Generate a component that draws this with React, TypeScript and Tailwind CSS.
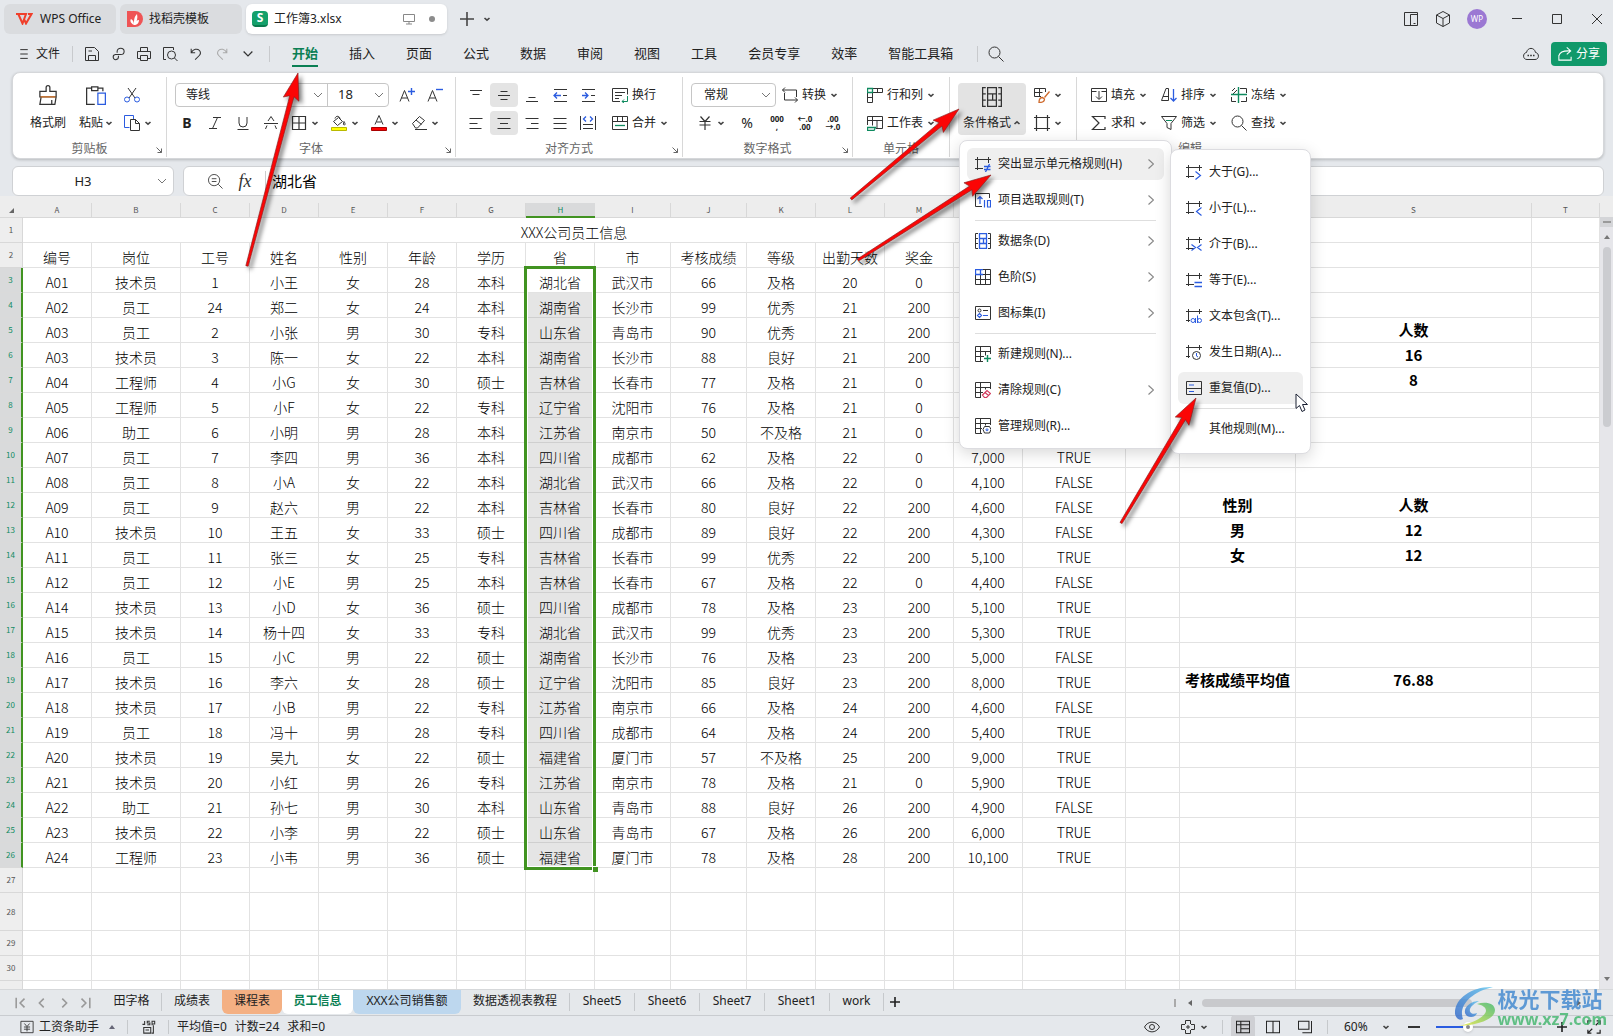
import type { ReactNode } from 'react';

type IconProps = { children: ReactNode; className?: string };

function Icon({ children, className = 'h-4 w-4 text-[#333]' }: IconProps) {
  return (
    <svg viewBox="0 0 16 16" fill="none" stroke="currentColor" className={`shrink-0 ${className}`} aria-hidden="true">
      {children}
    </svg>
  );
}

function Caret({ up = false }: { up?: boolean }) {
  return (
    <svg viewBox="0 0 8 8" fill="none" stroke="#444" strokeWidth="1.6" className="h-2 w-2 shrink-0" aria-hidden="true">
      <path d={up ? 'M1.5 5 4 2.8 6.5 5' : 'M1.5 3 4 5.2 6.5 3'} />
    </svg>
  );
}

function Chevron() {
  return (
    <svg viewBox="0 0 10 10" fill="none" stroke="#777" className="pointer-events-none h-2.5 w-2.5 shrink-0" aria-hidden="true">
      <path d="M1 3l4 4 4-4" />
    </svg>
  );
}

const blue = '#2b5ce0';
const green = '#0f8a5f';
const frame = <path d="M2.5 1v13M0 3.5h16M13.5 1v6M0 12.5h8" />;

const icons: Record<string, ReactNode> = {
  save: <path d="M1.5 1.5h9l4 4v9h-13zM4.5 14V9.500h7V14M4.500 5h3.500" />,
  link: <path strokeWidth="1.200" d="M7 6.500V5a4 3.500 0 1 1 4 3.500H5a3 3 0 1 0 3.500 3V10" />,
  print: <path d="M4.5 5V1.500h7V5M4 12.500H1.500v-7h13v7H12M4.500 9.500h7v5h-7z" />,
  preview: (
    <>
      <path d="M4 13.500H1.500v-12h10V4" />
      <circle cx="9.500" cy="9" r="4" />
      <path d="m12.500 12 3 3" />
    </>
  ),
  undo: <path strokeWidth="1.200" d="M2.500 2v4.500H7M2.500 6.500C5 2 9.500 1.500 12 4c2 2.500 1 4.500-.5 6L7 14.500" />,
  redo: <path strokeWidth="1.200" d="M13.500 2v4.500H9M13.500 6.500C11 2 6.500 1.500 4 4c-2 2.500-1 4.500.5 6L9 14.500" />,
  cut: (
    <>
      <path d="m4 1 7 10M12 1 5 11" />
      <g stroke={blue}>
        <circle cx="3" cy="12.500" r="2.500" />
        <circle cx="13" cy="12.500" r="2.500" />
      </g>
    </>
  ),
  copy: (
    <>
      <path stroke={blue} d="M5.500 12.500h-5v-12h9V4" />
      <path d="M6.500 4.500h5l4 4v7h-9zM11.500 4.500v4h4" />
    </>
  ),
  italic: <path d="M6 2.500h8M2 13.500h8M10.500 2.500l-5 11" />,
  underline: <path d="M4 2v6a4 4 0 0 0 8 0V2M2.500 14.500h11" />,
  strike: <path d="M5 6 8 1.500 11 6M1 8.500h14M4 10.500 2.500 14M12 10.500l1.500 3.500" />,
  border: <path strokeWidth="1.200" d="M1.500 1.500h13v13h-13zM8 1.500v13M1.500 8h13" />,
  fill: (
    <>
      <path d="M4 3.500C5 0 9 1 9 4M2.500 6.500l5-4 4 4-5 4zM13 6.500c1 1.500 1.500 3 .5 3.500s-1.500-1-.5-3.500" />
      <path fill="#ff0" stroke="#b9b900" d="M.5 12.500h15v3H.5z" />
    </>
  ),
  fontColor: (
    <>
      <path d="M4 9.500 8 .5l4 9M5.500 7h5" />
      <path fill="red" stroke="#a00" d="M.5 12.500h15v3H.5z" />
    </>
  ),
  erase: <path d="m1.500 8.500 7-7 5 4-7 7.500h-2zM5 5l5.500 4.500M4 14.500h12" />,
  bigger: (
    <>
      <path d="M1 14.500 5.500 3.500 10 14.500M2.500 11h6" />
      <path stroke={blue} strokeWidth="1.400" d="M9 4.500h7M12.500 1v7" />
    </>
  ),
  smaller: (
    <>
      <path d="M1 14.500 5.500 3.500 10 14.500M2.500 11h6" />
      <path stroke={blue} strokeWidth="1.400" d="M9 2.500h7" />
    </>
  ),
  top: <path d="M2 3.500h12M4.500 7.500h7" />,
  middle: <path d="M4.500 4.500h7M2 8.500h12M4.500 12.500h7" />,
  bottom: <path d="M4.500 10.500h7M2 14.500h12" />,
  outdent: (
    <>
      <path d="M2 2.500h13M11 8.500h4M2 14.500h13" />
      <path stroke={blue} strokeWidth="1.300" d="M9 8.500H2M5 5.500l-3 3 3 3" />
    </>
  ),
  indent: (
    <>
      <path d="M2 2.500h13M11 8.500h4M2 14.500h13" />
      <path stroke={blue} strokeWidth="1.300" d="M2 8.500h6M5 5.500l3 3-3 3" />
    </>
  ),
  left: <path d="M1.500 3.500h13M1.500 8.500h8M1.500 13.500h12" />,
  center: <path d="M1.500 3.500h13M4 8.500h8M1.500 13.500h13" />,
  right: <path d="M1.500 3.500h13M7 8.500h7.500M2.500 13.500h12" />,
  justify: <path d="M1.500 3.500h13M1.500 8.500h13M1.500 13.500h13" />,
  distribute: (
    <>
      <path d="M.5 1v14M15.500 1v14M3 9.500h10M3 13.500h10" />
      <path stroke={blue} strokeWidth="1.300" d="M6 1.500 3.500 4 6 6.500M10 1.500 12.500 4 10 6.500" />
    </>
  ),
  wrap: (
    <>
      <path d="M8 14.500H.5V1.500h15v6M3 5.500h10M3 8.500h7M3 11.500h4" />
      <path stroke={green} d="M15.500 9v5.500H10M12 12.500l-2 2 2 1.500" />
    </>
  ),
  merge: (
    <>
      <path d="M.5 1.500h15v13H.5zM.5 6.500h15M5.500 1.500v5M10.500 1.500v5" />
      <path stroke={green} strokeWidth="1.300" d="M3 10.500h10" />
    </>
  ),
  convert: <path d="M3 .5l-2.500 2.500h14v7M13 15.500l2.500-2.500h-13V6M.5 3 3 5.500M15.500 13 13 10.500" />,
  yuan: <path strokeWidth="1.200" d="m3.500 1.500 4.500 5 4.500-5M2.500 6.500h11M2.500 10h11M8 6.500v8.500" />,
  rowscols: (
    <>
      <path d="M5.500 1.500h10v4h-10M10.500 1.500v4M.5 5.500v10h5v-10M.5 10.500h5" />
      <path stroke={green} strokeWidth="1.300" d="M.5 1.500h5v4h-5z" />
    </>
  ),
  worksheet: (
    <>
      <path d="M.5 10V1.500h15v12H9M.5 5.500h15M5.500 1.500v9M10 5.500v8" />
      <path stroke={green} strokeWidth="1.300" d="M.5 12.500h8l-1.500 3H.5z" />
    </>
  ),
  cellStyle: (
    <>
      <path d="M7 9.500H.5v-8h11V5M.5 5.500h8M5.500 1.500v8" />
      <path stroke="#cf6a2c" strokeWidth="1.300" d="m15.500 4.500-5 6M5 15.500c0-3 1-5 3.500-5l2 1.500c0 2.500-2 3.500-5.500 3.500z" />
    </>
  ),
  cellFrame: <path strokeWidth="1.200" d="M2.500 0v16M13.500 0v16M0 2.500h16M0 13.500h16" />,
  fillDown: <path d="M.5 1.500h15v13H.5zM.5 4.500h5M10.500 4.500h5M8 4v8M5 9.500l3 3 3-3" />,
  sort: (
    <>
      <path d="M.5 13.500h7v-12H5zM2 9.500h5.500" />
      <path stroke={blue} strokeWidth="1.300" d="M12.500 2v12M9.500 11l3 3 3-3" />
    </>
  ),
  freeze: (
    <>
      <path d="M1 4l3-3M1 8l5-5M.5 10v4.500H5M10 14.500h5.500V10M9 1.500h6.500V6" />
      <path stroke={green} strokeWidth="1.400" d="M0 7.500h16M7.500 0v16" />
    </>
  ),
  sum: <path strokeWidth="1.200" d="M14 4V1.500H1.500L8 8l-6.500 6.500H14V12" />,
  filter: (
    <>
      <path d="M.5 1.500h15l-5.500 7v6l-4-2V8.500z" />
      <path stroke={green} d="M5 5.500h6" />
    </>
  ),
  find: (
    <>
      <circle cx="6.500" cy="6.500" r="5.500" />
      <path d="m10.500 10.500 5 5" />
    </>
  ),
  notEqual: (
    <>
      {frame}
      <path stroke={blue} strokeWidth="1.300" d="M9 10.500h6.500M9 13.500h6.500M14.500 8l-4 8" />
    </>
  ),
  topTen: (
    <>
      <path d="M7 14.500H.5v-13h14V6" />
      <path stroke={blue} strokeWidth="1.200" d="M5 12V4.500M2.500 7 5 4.500 7.500 7M9.500 8v7.500M12.500 8.500h3v6.500h-3z" />
    </>
  ),
  dataBar: (
    <>
      <path d="M3 .5H.5v15H3M.5 5.500H3M.5 10.500H3M13 .5h2.500v15H13M15.500 5.500H13M15.500 10.500H13" />
      <path stroke={blue} strokeWidth="1.300" d="M4.500.5h7v5h-7zM4.500 5.500h4v5h-4zM4.500 10.500h7v5h-7zM11.500 5.500v5" />
    </>
  ),
  scale: (
    <>
      <path d="M.5.5h15v15H.5zM.5 5.500h15M.5 10.500h15M5.500 5v10.500M10.500 0v15.500" />
      <path stroke={blue} strokeWidth="1.300" d="M8 .5H.5v5H8M5.500.5v5" />
    </>
  ),
  iconSet: (
    <>
      <path d="M.5 1.500h15v13H.5zM8 5.500h5" />
      <circle cx="4.500" cy="5.500" r="1.500" />
      <path stroke={blue} strokeWidth="1.200" d="M8 10.500h5M4.500 8.500l2 2-2 2-2-2z" />
    </>
  ),
  newRule: (
    <>
      <path d="M8 15.500H.5V.5h15V8M.5 5.500h15M.5 10.500H9M5.500.5v15M10.500 5.500v4" />
      <path stroke={green} strokeWidth="1.400" d="M9 12.500h7M12.500 9v7" />
    </>
  ),
  clearRule: (
    <>
      <path d="M6 15.500H.5V.5h15V7M.5 5.500h15M.5 10.500H8M5.500.5v15M10.500 5.500v2" />
      <path stroke="#d23a5e" strokeWidth="1.200" d="m7.500 13 4.500-4.500 3.500 3-4 4h-2zM10 10.500l3.500 3" />
    </>
  ),
  manageRule: (
    <>
      <path d="M7 15.500H.5V.5h15V7M.5 5.500h15M.5 10.500H7M5.500.5v15M10.500 5.500v2" />
      <path d="M9.500 8.500h5l1.500 3-1.500 3.500h-5L8 11.500z" />
      <circle cx="12" cy="11.800" r="1" stroke={blue} />
    </>
  ),
  greater: (
    <>
      {frame}
      <path stroke={blue} strokeWidth="1.200" d="m9.500 7.500 5 4-5 4" />
    </>
  ),
  less: (
    <>
      {frame}
      <path stroke={blue} strokeWidth="1.200" d="m15.500 7.500-5 4 5 4" />
    </>
  ),
  between: (
    <>
      {frame}
      <path stroke={blue} strokeWidth="1.200" d="m5.500 8.500 4 3-4 3M15.500 8.500l-4 3 4 3" />
    </>
  ),
  equal: (
    <>
      {frame}
      <path stroke={blue} strokeWidth="1.300" d="M8.500 10.500H16M8.500 14.500H16" />
    </>
  ),
  contains: (
    <>
      <path d="M2.500 1v13M0 3.500h16M13.500 1v5M0 12.500h4" />
      <g stroke={blue}>
        <circle cx="7" cy="12.500" r="2" />
        <circle cx="13.500" cy="12.500" r="2" />
        <path d="M9.500 10v5M11.500 7.500V15" />
      </g>
    </>
  ),
  dateRule: (
    <>
      <path d="M2.500 1v13M0 3.500h16M13.500 1v5M0 12.500h4" />
      <circle cx="10.500" cy="11.500" r="4" />
      <path stroke={blue} d="M10.500 9v3l1.500 1" />
    </>
  ),
  duplicate: (
    <>
      <path d="M.5 1.500h15v13H.5zM.5 8.500h15" />
      <path stroke={blue} strokeWidth="1.200" d="M3 5h5M3 11.500h5" />
    </>
  ),
};

function Tool({ icon, label, caret, active, className = 'w-7' }: { icon: string; label: string; caret?: boolean; active?: boolean; className?: string }) {
  return (
    <button aria-label={label} className={`flex h-6 shrink-0 items-center justify-center gap-1 rounded ${active ? 'bg-[#e4e4e4]' : ''} ${className}`}>
      <Icon className="h-4 w-4 text-[#333]">{icons[icon]}</Icon>
      {caret && <Caret />}
    </button>
  );
}

function TextTool({ icon, label, caret = true }: { icon: string; label: string; caret?: boolean }) {
  return (
    <button className="flex h-6 shrink-0 items-center gap-1 text-xs">
      <Icon>{icons[icon]}</Icon>
      <span>{label}</span>
      {caret && <Caret />}
    </button>
  );
}

function Group({ title, launcher, children, className }: { title?: string; launcher?: boolean; children: ReactNode; className: string }) {
  return (
    <section className={`relative flex h-20 shrink-0 flex-col border-r border-[#d8d8d8] ${className}`}>
      <div className="pt-1">{children}</div>
      {title && <p className="mt-1 text-center text-xs leading-4 text-[#666]">{title}</p>}
      {launcher && (
        <svg viewBox="0 0 6 6" fill="none" stroke="#666" className="absolute right-1 bottom-1 h-1.5 w-1.5" aria-hidden="true">
          <path d="m.5.5 5 5M5.500 1.500v4h-4" />
        </svg>
      )}
    </section>
  );
}

const ruleMenu = [
  { icon: 'notEqual', label: '突出显示单元格规则(H)', sub: true, active: true },
  { icon: 'topTen', label: '项目选取规则(T)', sub: true, line: true },
  { icon: 'dataBar', label: '数据条(D)', sub: true },
  { icon: 'scale', label: '色阶(S)', sub: true },
  { icon: 'iconSet', label: '图标集(I)', sub: true, line: true },
  { icon: 'newRule', label: '新建规则(N)...' },
  { icon: 'clearRule', label: '清除规则(C)', sub: true },
  { icon: 'manageRule', label: '管理规则(R)...' },
];

const highlightMenu = [
  { icon: 'greater', label: '大于(G)...' },
  { icon: 'less', label: '小于(L)...' },
  { icon: 'between', label: '介于(B)...' },
  { icon: 'equal', label: '等于(E)...' },
  { icon: 'contains', label: '文本包含(T)...' },
  { icon: 'dateRule', label: '发生日期(A)...' },
  { icon: 'duplicate', label: '重复值(D)...', active: true, line: true },
  { icon: '', label: '其他规则(M)...' },
];

type MenuEntry = { icon: string; label: string; sub?: boolean; active?: boolean; line?: boolean };

function Menu({ items, className }: { items: MenuEntry[]; className: string }) {
  return (
    <div role="menu" className={`absolute rounded-lg border border-[#dcdce0] bg-white px-[7px] shadow-[0_4px_16px_rgba(0,0,0,0.16)] ${className}`}>
      {items.map((item) => (
        <div key={item.label} className="flex flex-col">
          <button
            role="menuitem"
            className={`my-0.5 flex h-8 items-center gap-[7px] rounded-md px-2 text-xs text-[#222] ${item.active ? 'bg-[#efefef]' : ''}`}
          >
            <Icon>{item.icon && icons[item.icon]}</Icon>
            <span className="grow text-left whitespace-nowrap">{item.label}</span>
            {item.sub && (
              <svg viewBox="0 0 6 10" fill="none" stroke="#888" strokeWidth="1.200" className="mr-0.5 h-2.5 w-1.5" aria-hidden="true">
                <path d="m.5.5 5 4.500-5 4.500" />
              </svg>
            )}
          </button>
          {item.line && <hr className="mx-2 my-0.5 border-[#dedede]" />}
        </div>
      ))}
    </div>
  );
}

function TitleBar() {
  return (
    <header className="flex h-9 shrink-0 items-center pt-1 pr-2 pb-0.5 pl-1 text-xs">
      <button className="flex h-[30px] w-28 items-center gap-[7px] rounded-md bg-[#dadcdf] pl-3">
        <svg viewBox="0 0 17 12" className="h-3 w-[17px]" fill="none" stroke="#f0402c" strokeWidth="2" aria-hidden="true">
          <path d="M0 1h10L6.500 10.500 2.500 1.500M8 6l2 4.500L15.500 1H12" />
        </svg>
        WPS Office
      </button>
      <button className="ml-1 flex h-[30px] w-[122px] items-center gap-1.5 rounded-md bg-[#dadcdf] pl-[7px]">
        <svg viewBox="0 0 16 16" className="h-4 w-4" aria-hidden="true">
          <path d="M0 0h8a8 8 0 0 1 0 16H0z" fill="#ef5455" />
          <path d="M7 14c-4-2-4-5-3-6 2 1 3 3 3 6 0-5 0-8 3-11 1 4 0 8-3 11 1-3 3-5 5-5 0 3-2 5-5 5" fill="#fff" />
        </svg>
        找稻壳模板
      </button>
      <button className="ml-1 flex h-[30px] w-[201px] items-center gap-1.5 rounded-md bg-white pl-1.5 shadow-sm">
        <span className="grid h-4 w-4 place-items-center rounded-sm border-b-2 border-[#0a7a4e] bg-[#14a06b] text-xs leading-3 font-bold text-white">S</span>
        工作簿3.xlsx
        <svg viewBox="0 0 12 12" fill="none" stroke="#888" className="ml-auto h-3 w-3" aria-hidden="true">
          <path d="M.5 1.500h11v7H.5zM3 11h6M6 8.500V11" />
        </svg>
        <span className="mr-3 ml-2 h-1.5 w-1.5 rounded-full bg-[#8c8c8c]" />
      </button>
      <button aria-label="新建标签" className="ml-3 grid h-6 w-4 place-items-center">
        <Icon className="h-3.5 w-3.5 text-[#444]"><path strokeWidth="1.800" d="M8 0v16M0 8h16" /></Icon>
      </button>
      <button aria-label="标签列表" className="ml-1.5 grid h-6 w-3 place-items-center"><Caret /></button>
      <div className="ml-auto flex items-center text-[#333]">
        <button aria-label="侧栏" className="w-8"><Icon className="mx-auto h-4 w-4 text-[#333]"><path d="M1.500 1.500h13v13h-13zM7.500 14.500v-11h7M10.500 12.500h2" /></Icon></button>
        <button aria-label="应用" className="w-8"><Icon className="mx-auto h-4 w-4 text-[#333]"><path d="M8 .5 14.500 4v8L8 15.500 1.500 12V4zM1.500 4 8 7.500 14.500 4M8 7.500v8" /></Icon></button>
        <button className="mr-1.5 ml-2 h-5 w-5 rounded-full bg-[#9b78d3] text-[8px] leading-5 text-white">WP</button>
        <button aria-label="最小化" className="ml-1 w-10"><Icon className="mx-auto h-4 w-4 text-[#333]"><path d="M3 7.500h10" /></Icon></button>
        <button aria-label="最大化" className="w-10"><Icon className="mx-auto h-4 w-4 text-[#333]"><path d="M3.500 3.500h9v9h-9z" /></Icon></button>
        <button aria-label="关闭" className="-mr-3 w-10"><Icon className="mx-auto h-4 w-4 text-[#333]"><path d="m3 3 10 10M13 3 3 13" /></Icon></button>
      </div>
    </header>
  );
}

const tabs = ['插入', '页面', '公式', '数据', '审阅', '视图', '工具', '会员专享', '效率', '智能工具箱'];

function MenuBar() {
  return (
    <nav className="flex h-9 shrink-0 items-center pr-1.5 pl-[19px] text-xs">
      <button className="flex w-[53px] items-center gap-[7px]">
        <Icon className="h-2.5 w-2.5 text-[#333]"><path strokeWidth="1.600" d="M2 1h12M2 8h12M2 15h12" /></Icon>
        文件
      </button>
      <span className="h-4 w-px bg-[#c8cacd]" />
      <div className="ml-1.5 flex">
        {['save', 'link', 'print', 'preview', 'undo'].map((name) => (
          <button key={name} aria-label={name} className="grid w-[26px] place-items-center">
            <Icon className={name === 'link' || name === 'undo' ? 'h-3.5 w-3.5 text-[#333]' : 'h-4 w-4 text-[#333]'}>{icons[name]}</Icon>
          </button>
        ))}
        <button aria-label="redo" className="grid w-[26px] place-items-center"><Icon className="h-3.5 w-3.5 text-[#aaa]">{icons.redo}</Icon></button>
        <button aria-label="更多" className="grid w-[26px] place-items-center"><Icon className="h-2.5 w-2.5 text-[#333]"><path strokeWidth="2" d="m1 4 7 7 7-7" /></Icon></button>
      </div>
      <span className="ml-2 h-4 w-px bg-[#c8cacd]" />
      <div className="ml-[22px] flex gap-[31px] text-[13px] text-[#222]">
        <button className="-mb-1 border-b-2 border-[#0b7f54] pb-0.5 font-bold text-[#0b7f54]">开始</button>
        {tabs.map((tab) => (
          <button key={tab} className="whitespace-nowrap">{tab}</button>
        ))}
      </div>
      <span className="ml-6 h-4 w-px bg-[#c8cacd]" />
      <button aria-label="搜索" className="ml-2.5 grid w-4 place-items-center"><Icon>{icons.find}</Icon></button>
      <button aria-label="云同步" className="ml-auto">
        <Icon className="h-4 w-4 text-[#333]">
          <path d="M4 13.500C-.5 13.500-.5 7 3.500 6.500 4.500 1 11.500 1 12.500 6.500c4 .5 4 7-.5 7z" />
          <path strokeWidth="1.600" d="M4.500 9.500H6M7.200 9.500h1.600M10 9.500h1.500" />
        </Icon>
      </button>
      <button className="ml-3 flex h-6 w-14 items-center gap-1 rounded bg-[#10996a] pl-[7px] text-xs text-white">
        <Icon className="h-3.5 w-3.5 text-white"><path strokeWidth="1.200" d="M1 9v6h14V11M1 10c1-4 5-6 13-5.500M10 .5l4.500 4-4.500 4" /></Icon>
        分享
      </button>
    </nav>
  );
}

function Ribbon() {
  return (
    <div className="mr-[9px] ml-3 flex h-[87px] shrink-0 rounded-lg border border-[#d5d7da] bg-white pt-1 text-xs text-[#222] shadow-[0_1px_3px_rgba(0,0,0,0.2)]">
      <Group title="剪贴板" launcher className="w-[154px]">
        <div className="flex h-14 pl-[17px]">
          <button className="flex w-9 flex-col items-center justify-between pb-1">
            <Icon className="mt-1 h-5 w-5 text-[#333]">
              <path d="M6.500 5V2a1.500 1.500 0 0 1 3 0v3h5v4.500h-13V5zM2.500 9.500l-1 6h12l1-6M11 12v3.500" />
              <path stroke="#e07a2a" d="M2 9.500h12" />
            </Icon>
            <span className="leading-5 whitespace-nowrap">格式刷</span>
          </button>
          <button className="ml-3 flex w-9 flex-col items-center justify-between pb-1">
            <Icon className="mt-1 h-5 w-5 text-[#333]">
              <path d="M4 2.500H.5v13H7M10 2.500h3.500V5M4.500 1.500h5v3h-5z" />
              <path stroke={blue} d="M9.500 6.500h6v9h-6z" />
            </Icon>
            <span className="flex items-center gap-0.5 leading-5 whitespace-nowrap">粘贴 <Caret /></span>
          </button>
          <div className="ml-2 pt-0.5">
            <Tool icon="cut" label="剪切" className="w-6 pr-1" />
            <Tool icon="copy" label="复制" caret className="mt-1 w-8" />
          </div>
        </div>
      </Group>
      <Group title="字体" launcher className="w-[289px]">
        <div className="flex h-7 items-center pl-2">
          <div className="flex h-6 rounded border border-[#c6c6c6]">
            <label className="relative flex w-[152px] items-center border-r border-[#c6c6c6]">
              <select aria-label="字体" className="h-full w-full appearance-none pl-2.5 outline-none"><option>等线</option></select>
              <span className="absolute right-1"><Chevron /></span>
            </label>
            <label className="relative flex w-[60px] items-center">
              <select aria-label="字号" className="h-full w-full appearance-none pl-2.5 text-[13px] outline-none"><option>18</option></select>
              <span className="absolute right-1"><Chevron /></span>
            </label>
          </div>
          <Tool icon="bigger" label="增大字号" className="ml-1 w-7" />
          <Tool icon="smaller" label="减小字号" />
        </div>
        <div className="flex h-7 items-center pl-1.5">
          <button aria-label="加粗" className="w-7 text-sm font-bold">B</button>
          <Tool icon="italic" label="斜体" />
          <Tool icon="underline" label="下划线" />
          <Tool icon="strike" label="删除线" />
          <Tool icon="border" label="边框" caret className="w-10" />
          <Tool icon="fill" label="填充色" caret className="w-10" />
          <Tool icon="fontColor" label="字体颜色" caret className="w-10" />
          <Tool icon="erase" label="清除" caret className="w-10" />
        </div>
      </Group>
      <Group title="对齐方式" launcher className="w-[227px]">
        <div className="flex h-7 items-center pl-1.5">
          <Tool icon="top" label="顶端对齐" />
          <Tool icon="middle" label="垂直居中" active />
          <Tool icon="bottom" label="底端对齐" />
          <Tool icon="outdent" label="减少缩进" />
          <Tool icon="indent" label="增加缩进" />
          <span className="w-2.5" />
          <TextTool icon="wrap" label="换行" caret={false} />
        </div>
        <div className="flex h-7 items-center pl-1.5">
          <Tool icon="left" label="左对齐" />
          <Tool icon="center" label="居中" active />
          <Tool icon="right" label="右对齐" />
          <Tool icon="justify" label="两端对齐" />
          <Tool icon="distribute" label="分散对齐" />
          <span className="w-2.5" />
          <TextTool icon="merge" label="合并" />
        </div>
      </Group>
      <Group title="数字格式" launcher className="w-[170px]">
        <div className="flex h-7 items-center gap-1.5 pl-2">
          <label className="relative flex h-6 w-[85px] items-center rounded border border-[#c6c6c6]">
            <select aria-label="数字格式" className="h-full w-full appearance-none pl-3 outline-none"><option>常规</option></select>
            <span className="absolute right-1"><Chevron /></span>
          </label>
          <TextTool icon="convert" label="转换" />
        </div>
        <div className="flex h-7 items-center pl-2">
          <Tool icon="yuan" label="货币" caret className="w-10" />
          <button aria-label="百分比" className="w-8 text-center text-sm">%</button>
          <button aria-label="千位分隔" className="w-7 text-[8px] leading-2 font-bold">000<br />,</button>
          <button aria-label="增加小数位" className="w-7 text-[8px] leading-2 font-bold">←.0<br />.00</button>
          <button aria-label="减少小数位" className="w-7 text-[8px] leading-2 font-bold">.00<br />→.0</button>
        </div>
      </Group>
      <Group title="单元格" className="w-[97px]">
        <div className="flex h-7 items-center pl-3.5"><TextTool icon="rowscols" label="行和列" /></div>
        <div className="flex h-7 items-center pl-3.5"><TextTool icon="worksheet" label="工作表" /></div>
      </Group>
      <Group className="w-[127px]">
        <div className="flex pt-0.5 pl-2">
          <div className="relative">
            <button aria-expanded="true" className="flex h-[52px] w-[68px] flex-col items-center justify-between rounded bg-[#e3e3e3]">
              <Icon className="mt-1 h-5 w-5 text-[#333]">
                <path d="M3 .5H.5v15H3M.5 5.500H3M.5 10.500H3M13 .5h2.500v15H13M15.500 5.500H13M15.500 10.500H13M4.500.5h7v5h-7zM4.500 5.500h4v5h-4zM4.500 10.500h7v5h-7zM11.500 5.500v5" />
              </Icon>
              <span className="flex items-center gap-0.5 pb-0.5 leading-5 whitespace-nowrap">条件格式 <Caret up /></span>
            </button>
            <Menu items={ruleMenu} className="top-[57px] left-px z-10 w-[213px] pt-[5px] pb-1" />
            <Menu items={highlightMenu} className="top-[66px] left-[212px] z-20 w-[141px] pt-1 pb-1.5" />
            <svg viewBox="0 0 14 20" className="absolute top-[310px] left-[337px] z-30 h-5 w-3.5" fill="#fff" stroke="#1a2033" aria-hidden="true">
              <path d="M1 1v14.500l3.500-3 2.500 6 3-1.500-2.500-5.500h5z" />
            </svg>
          </div>
          <div>
            <Tool icon="cellStyle" label="单元格样式" caret className="ml-1.5 w-8" />
            <Tool icon="cellFrame" label="单元格边框" caret className="mt-1 ml-1.5 w-8" />
          </div>
        </div>
      </Group>
      <section className="w-[226px] pt-1">
        <div className="flex h-7 items-center gap-3.5 pl-3.5">
          <TextTool icon="fillDown" label="填充" />
          <TextTool icon="sort" label="排序" />
          <TextTool icon="freeze" label="冻结" />
        </div>
        <div className="flex h-7 items-center gap-3.5 pl-3.5">
          <TextTool icon="sum" label="求和" />
          <TextTool icon="filter" label="筛选" />
          <TextTool icon="find" label="查找" />
        </div>
        <p className="mt-1 text-center text-xs leading-4 text-[#666]">编辑</p>
      </section>
    </div>
  );
}

function FormulaBar() {
  return (
    <div className="mt-[7px] mr-[9px] ml-3 flex h-[30px] shrink-0 gap-[9px] text-[13px]">
      <div className="relative flex w-[162px] items-center rounded-md border border-[#cfd1d4] bg-white">
        <input aria-label="名称框" defaultValue="H3" className="h-full w-full bg-transparent pr-5 text-center outline-none" />
        <span className="absolute right-1.5"><Chevron /></span>
      </div>
      <div className="flex grow items-center rounded-md border border-[#cfd1d4] bg-white pl-6">
        <Icon className="h-[15px] w-[15px] text-[#444]">
          <circle cx="6.500" cy="6.500" r="6" />
          <path d="m11 11 4.500 4.500M4 5h5M4 8h5" />
        </Icon>
        <button aria-label="插入函数" className="ml-3.5 w-4 font-['Liberation_Serif',serif] text-lg leading-6 text-[#333] italic">fx</button>
        <span className="ml-3 h-5 w-px bg-[#ccc]" />
        <input aria-label="编辑栏" defaultValue="湖北省" className="ml-1.5 grow text-[15px] text-black outline-none" />
      </div>
    </div>
  );
}

const columns = [
  { name: 'A', width: 'w-[69px]' },
  { name: 'B', width: 'w-[89px]' },
  { name: 'C', width: 'w-[69px]' },
  { name: 'D', width: 'w-[69px]' },
  { name: 'E', width: 'w-[69px]' },
  { name: 'F', width: 'w-[69px]' },
  { name: 'G', width: 'w-[69px]' },
  { name: 'H', width: 'w-[69px]' },
  { name: 'I', width: 'w-[76px]' },
  { name: 'J', width: 'w-[76px]' },
  { name: 'K', width: 'w-[69px]' },
  { name: 'L', width: 'w-[69px]' },
  { name: 'M', width: 'w-[69px]' },
  { name: 'N', width: 'w-[69px]' },
  { name: 'O', width: 'w-[103px]' },
  { name: 'P', width: 'w-[54px]' },
  { name: 'R', width: 'w-[116px]' },
  { name: 'S', width: 'w-[236px]' },
  { name: 'T', width: '' },
];

const records = `编号 岗位 工号 姓名 性别 年龄 学历 省 市 考核成绩 等级 出勤天数 奖金
A01 技术员 1 小王 女 28 本科 湖北省 武汉市 66 及格 20 0
A02 员工 24 郑二 女 24 本科 湖南省 长沙市 99 优秀 21 200
A03 员工 2 小张 男 30 专科 山东省 青岛市 90 优秀 21 200
A03 技术员 3 陈一 女 22 本科 湖南省 长沙市 88 良好 21 200
A04 工程师 4 小G 女 30 硕士 吉林省 长春市 77 及格 21 0
A05 工程师 5 小F 女 22 专科 辽宁省 沈阳市 76 及格 21 0
A06 助工 6 小明 男 28 本科 江苏省 南京市 50 不及格 21 0
A07 员工 7 李四 男 36 本科 四川省 成都市 62 及格 22 0 7,000 TRUE
A08 员工 8 小A 女 22 本科 湖北省 武汉市 66 及格 22 0 4,100 FALSE
A09 员工 9 赵六 男 22 本科 吉林省 长春市 80 良好 22 200 4,600 FALSE
A10 技术员 10 王五 女 33 硕士 四川省 成都市 89 良好 22 200 4,300 FALSE
A11 员工 11 张三 女 25 专科 吉林省 长春市 99 优秀 22 200 5,100 TRUE
A12 员工 12 小E 男 25 本科 吉林省 长春市 67 及格 22 0 4,400 FALSE
A14 技术员 13 小D 女 36 硕士 四川省 成都市 78 及格 23 200 5,100 TRUE
A15 技术员 14 杨十四 女 33 专科 湖北省 武汉市 99 优秀 23 200 5,300 TRUE
A16 员工 15 小C 男 22 硕士 湖南省 长沙市 76 及格 23 200 5,000 FALSE
A17 技术员 16 李六 女 28 硕士 辽宁省 沈阳市 85 良好 23 200 8,000 TRUE
A18 技术员 17 小B 男 22 专科 江苏省 南京市 66 及格 24 200 4,600 FALSE
A19 员工 18 冯十 男 28 专科 四川省 成都市 64 及格 24 200 5,400 TRUE
A20 技术员 19 吴九 女 22 硕士 福建省 厦门市 57 不及格 25 200 9,000 TRUE
A21 技术员 20 小红 男 26 专科 江苏省 南京市 78 及格 21 0 5,900 TRUE
A22 助工 21 孙七 男 30 本科 山东省 青岛市 88 良好 26 200 4,900 FALSE
A23 技术员 22 小李 男 22 硕士 山东省 青岛市 67 及格 26 200 6,000 TRUE
A24 工程师 23 小韦 男 36 硕士 福建省 厦门市 78 及格 28 200 10,100 TRUE`
  .split('\n')
  .map((line) => line.split(' '));

// Summary block to the right of the staff list: row -> [R, S]
const summary: Record<number, string[]> = {
  5: ['', '人数'],
  6: ['', '16'],
  7: ['', '8'],
  12: ['性别', '人数'],
  13: ['男', '12'],
  14: ['女', '12'],
  19: ['考核成绩平均值', '76.88'],
};

const rowNumbers = Array.from({ length: 30 }, (_, i) => i + 1);

function RowHead({ row }: { row: number }) {
  const selected = row >= 3 && row <= 26;
  return (
    <th
      className={`border-b p-0 text-[8px] leading-3 font-normal ${
        selected ? 'border-r-2 border-b-[#dadada] border-r-[#419321] bg-[#d9dadb] text-[#0f8a5f]' : 'border-r border-[#d8d8d8] bg-[#eeeeee] text-[#555]'
      }`}
    >
      {row}
    </th>
  );
}

function Sheet() {
  return (
    <main className="flex min-h-0 flex-1 bg-[#ededed] pt-[7px]">
      <div className="min-w-0 grow overflow-hidden bg-white">
        <table className="w-full table-fixed border-separate border-spacing-0 bg-white text-center font-['Noto_Sans_CJK_SC',sans-serif] text-sm leading-5 font-light text-black">
          <thead>
            <tr className="h-[15px] bg-[#ededed] text-[8px] leading-3 text-[#555]">
              <th className="w-[23px] border-b border-[#d8d8d8] p-0">
                <svg viewBox="0 0 5 5" className="mx-auto h-[5px] w-[5px]" fill="#666" aria-hidden="true"><path d="M5 0v5H0z" /></svg>
              </th>
              {columns.map((col) => (
                <th
                  key={col.name}
                  className={`p-0 font-normal ${col.width} ${
                    col.name === 'H' ? 'border-b-2 border-[#419321] bg-[#d9dadb] text-[#0f8a5f]' : 'border-r border-b border-[#d8d8d8]'
                  }`}
                >
                  {col.name}
                </th>
              ))}
            </tr>
          </thead>
          <tbody>
            {rowNumbers.map((row) => {
              const record = records[row - 2] ?? [];
              const extra = summary[row] ?? [];
              return (
                <tr key={row} className={row === 28 ? 'h-[38px]' : 'h-[25px]'}>
                  <RowHead row={row} />
                  {row === 1 && <td colSpan={15} className="border-r border-b border-[#e2e2e2] p-0 pt-1">XXX公司员工信息</td>}
                  {columns.map((col, i) => {
                    if (row === 1 && i < 15) return null;
                    const bold = i > 15;
                    return (
                      <td
                        key={col.name}
                        className={`border-r border-b border-[#e2e2e2] p-0 whitespace-nowrap ${bold ? 'text-[15px] font-bold' : 'pt-1'} ${
                          col.name === 'H' && row > 3 && row < 27 ? 'border-b-[#cfcfcf] bg-[#e5e5e5]' : ''
                        } ${col.name === 'H' && row === 3 ? 'relative' : ''}`}
                      >
                        {bold ? extra[i - 16] : record[i]}
                        {col.name === 'H' && row === 3 && (
                          <div className="absolute -top-0.5 -left-0.5 h-[604px] w-[72px] border-3 border-[#419321] shadow-[inset_0_0_0_1px_#fff]">
                            <span className="absolute -right-[5px] -bottom-[5px] h-1.5 w-1.5 border-t border-l border-white bg-[#419321]" />
                          </div>
                        )}
                      </td>
                    );
                  })}
                </tr>
              );
            })}
            <tr className="h-[25px]">
              <td className="border-r border-[#d8d8d8] bg-[#eeeeee] p-0" />
              {columns.map((col) => (
                <td key={col.name} className="border-r border-[#e2e2e2] p-0" />
              ))}
            </tr>
          </tbody>
        </table>
      </div>
      <aside className="mt-[14px] flex w-[13px] shrink-0 flex-col items-center bg-[#e6e6ea] pb-2">
        <span className="grid h-2.5 w-full place-items-center bg-[#d4d5d8]"><span className="h-0.5 w-2 bg-[#9a9a9a]" /></span>
        <svg viewBox="0 0 6 4" className="mt-2 h-1 w-1.5" fill="#777" aria-hidden="true"><path d="M3 0l3 4H0z" /></svg>
        <span className="mt-2 h-[180px] w-2 rounded-full bg-[#cbccd0]" />
        <svg viewBox="0 0 6 4" className="mt-auto h-1 w-1.5" fill="#777" aria-hidden="true"><path d="M3 4l3-4H0z" /></svg>
      </aside>
    </main>
  );
}

const sheetTabs = [
  { name: '田字格', className: 'w-[60px] border-r border-[#c6c9cc]' },
  { name: '成绩表', className: 'w-[60px]' },
  { name: '课程表', className: 'w-[60px] h-full rounded-b-md bg-[#f4b083]' },
  { name: '员工信息', className: 'w-[71px] h-full rounded-b-md bg-white font-bold text-[#0b7f54]' },
  { name: 'XXX公司销售额', className: 'w-[108px] h-full rounded-b-md bg-[#bdd7ee]' },
  { name: '数据透视表教程', className: 'w-[109px] border-r border-[#c6c9cc]' },
  { name: 'Sheet5', className: 'w-[65px] border-r border-[#c6c9cc]' },
  { name: 'Sheet6', className: 'w-[65px] border-r border-[#c6c9cc]' },
  { name: 'Sheet7', className: 'w-[65px] border-r border-[#c6c9cc]' },
  { name: 'Sheet1', className: 'w-[65px] border-r border-[#c6c9cc]' },
  { name: 'work', className: 'w-[54px] border-r border-[#c6c9cc]' },
];

const pagers = ['M2.500 2v12M12 3 7 8l5 5', 'M10 3 5 8l5 5', 'M6 3l5 5-5 5', 'M4 3l5 5-5 5M13.500 2v12'];

function SheetTabs() {
  return (
    <div className="flex h-[27px] shrink-0 border-y border-t-[#d6d8da] border-b-[#c9ccd0] bg-[#e5e8eb] text-xs text-[#222]">
      <div className="mr-1.5 flex w-24 items-center pl-2.5">
        {pagers.map((d) => (
          <button key={d} aria-label="切换工作表" className="grid w-[22px] place-items-center">
            <Icon className="h-3.5 w-3.5 text-[#999]"><path strokeWidth="1.800" d={d} /></Icon>
          </button>
        ))}
      </div>
      <div className="flex h-6 items-center">
        {sheetTabs.map((tab) => (
          <button key={tab.name} className={`h-[18px] shrink-0 pb-0.5 whitespace-nowrap ${tab.className}`}>{tab.name}</button>
        ))}
        <button aria-label="新建工作表" className="ml-1.5 grid place-items-center">
          <Icon className="h-2.5 w-2.5 text-[#222]"><path strokeWidth="2.600" d="M8 0v16M0 8h16" /></Icon>
        </button>
      </div>
      <div className="ml-auto flex items-center pr-8">
        <span className="h-2 w-0.5 bg-[#aaa]" />
        <svg viewBox="0 0 4 6" className="ml-3 h-1.5 w-1" fill="#666" aria-hidden="true"><path d="M4 0v6L0 3z" /></svg>
        <span className="ml-2.5 h-2 w-[270px] rounded-full bg-[#c8c9cc]" />
        <svg viewBox="0 0 4 6" className="ml-[105px] h-1.5 w-1" fill="#666" aria-hidden="true"><path d="M0 0v6l4-3z" /></svg>
      </div>
    </div>
  );
}

function StatusBar() {
  return (
    <footer className="flex h-5 shrink-0 items-center bg-[#e5e8ec] pt-0.5 pl-5 text-xs leading-4 text-[#222]">
      <Icon className="h-3.5 w-3.5 text-[#333]"><path d="M1 1.500h14v13H1zM5 4l3 3.500L11 4M4.500 8h7M4.500 10.500h7M8 8v5" /></Icon>
      <button className="ml-[5px] flex items-center gap-2.5">
        工资条助手
        <svg viewBox="0 0 6 4" className="h-1 w-1.5" fill="#667" aria-hidden="true"><path d="M3 0l3 4H0z" /></svg>
      </button>
      <span className="ml-3 h-3.5 w-px bg-[#c6c9cc]" />
      <Icon className="ml-3.5 h-3.5 w-3.5 text-[#333]"><path strokeWidth="1.200" d="M3 1v4H.5M9 1.500H6v2h3v2H6M11.500 6V1.500h3v3h-3M2 8.500h8v6.500H2zM4 11.500h4M13 6v9h-2" /></Icon>
      <span className="ml-3 h-3.5 w-px bg-[#c6c9cc]" />
      <p className="ml-2 flex gap-2"><span>平均值=0</span><span>计数=24</span><span>求和=0</span></p>
      <div className="ml-auto flex items-center pr-3">
        <Icon><path d="M.5 8C4 1.500 12 1.500 15.500 8 12 14.500 4 14.500.5 8z" /><circle cx="8" cy="8" r="2.500" /></Icon>
        <Icon className="ml-5 h-4 w-4 text-[#333]"><path d="M5.500 5V1.500h5V5M5.500 11v3.500h5V11M5 5.500H1.500v5H5M11 5.500h3.500v5H11M8 6v4M6 8h4" /></Icon>
        <span className="ml-1"><Caret /></span>
        <span className="ml-3.5 h-3.5 w-px bg-[#c6c9cc]" />
        <button aria-label="普通视图" className="-my-1 ml-2 grid h-6 w-6 place-items-center rounded-t bg-[#cfd0d4]">
          <Icon className="h-3.5 w-3.5 text-[#222]"><path strokeWidth="1.200" d="M.5 1.500h15v13H.5zM.5 5.500h15M5.500 1.500v13M5.500 10h10" /></Icon>
        </button>
        <button aria-label="分页预览" className="grid w-8 place-items-center pl-1"><Icon className="h-3.5 w-3.5 text-[#222]"><path strokeWidth="1.200" d="M.5 1.500h15v13H.5zM8 1.500v13" /></Icon></button>
        <button aria-label="阅读视图" className="grid w-8 place-items-center pl-1"><Icon className="h-3.5 w-3.5 text-[#222]"><path strokeWidth="1.200" d="M.5 1.500h12v9H.5zM15.500 1v13.500H5" /></Icon></button>
        <span className="ml-2 h-3.5 w-px bg-[#c6c9cc]" />
        <span className="ml-4 w-[38px]">60%</span>
        <Caret />
        <span className="ml-[18px] h-0.5 w-3 bg-[#333]" />
        <input
          type="range"
          aria-label="缩放"
          defaultValue={28}
          className="ml-4 h-0.5 w-[106px] appearance-none bg-[linear-gradient(90deg,#2b5ce0_30%,#b4b6ba_30%)] [&::-webkit-slider-thumb]:h-2.5 [&::-webkit-slider-thumb]:w-2.5 [&::-webkit-slider-thumb]:appearance-none [&::-webkit-slider-thumb]:rounded-full [&::-webkit-slider-thumb]:border-[3px] [&::-webkit-slider-thumb]:border-white [&::-webkit-slider-thumb]:bg-[#888] [&::-webkit-slider-thumb]:shadow"
        />
        <Icon className="ml-[15px] h-2.5 w-2.5 text-[#222]"><path strokeWidth="2.600" d="M8 0v16M0 8h16" /></Icon>
        <Icon className="ml-5 h-3.5 w-3.5 text-[#222]"><path strokeWidth="1.400" d="M1 5V1h4M11 1h4v4M15 11v4h-4M5 15H1v-4M10 6l4.500-4.500M6 10l-4.500 4.500" /></Icon>
      </div>
    </footer>
  );
}

const arrows = [
  { tip: [298, 73], tail: [247, 266] },
  { tip: [959, 109], tail: [851, 199] },
  { tip: [991, 175], tail: [858, 260] },
  { tip: [1196, 398], tail: [1121, 523] },
];

function Arrows() {
  return (
    <svg className="pointer-events-none absolute inset-0 z-40 h-full w-full drop-shadow-[3px_3px_2px_rgba(0,0,0,0.5)]" aria-hidden="true">
      {arrows.map(({ tip: [x, y], tail: [tx, ty] }) => {
        const length = Math.hypot(tx - x, ty - y);
        const angle = (Math.atan2(ty - y, tx - x) * 180) / Math.PI;
        return (
          <path
            key={x}
            transform={`translate(${x} ${y}) rotate(${angle})`}
            d={`M0 0 27-8 24-2.200 ${length}-1.200V1.200L24 2.200 27 8z`}
            fill="#fb0505"
            stroke="#8a2020"
            strokeWidth="0.600"
          />
        );
      })}
    </svg>
  );
}

function Watermark() {
  return (
    <div className="pointer-events-none absolute right-1.5 bottom-2 z-50 flex items-center opacity-80">
      <svg viewBox="0 0 44 42" className="h-[42px] w-11" aria-hidden="true">
        <defs>
          <linearGradient id="swirlBlue" x1="1" y1="0" x2="0" y2="1"><stop offset="0" stopColor="#5cc4ee" /><stop offset="1" stopColor="#2c63c8" /></linearGradient>
          <linearGradient id="swirlGreen" x1="1" y1="0" x2="0" y2="1"><stop offset="0" stopColor="#3fb86a" /><stop offset="1" stopColor="#e8e83c" /></linearGradient>
        </defs>
        <path fill="url(#swirlBlue)" d="M40 1C20 0 1 12 2 28c1 5 5 7 8 5C5 20 18 6 40 1z" />
        <path fill="url(#swirlBlue)" d="M26 15c-10 0-18 9-12 15 4 2 9 1 10-3-4 2-8 0-7-4 1-3 5-6 9-8z" />
        <path fill="url(#swirlGreen)" d="M24 18c8-3 18-1 18 6 0 9-16 15-36 16 14-3 26-9 27-15 0-4-4-6-9-7z" />
      </svg>
      <div className="leading-none font-bold">
        <p className="text-[21px] leading-6 text-[#3d86cf]">极光下载站</p>
        <p className="text-base leading-4 text-[#3fb56b]">www.xz7.com</p>
      </div>
    </div>
  );
}

export default function App() {
  return (
    <div className="relative flex h-screen flex-col overflow-hidden bg-[#e5e8ec] font-['Noto_Sans','Noto_Sans_CJK_SC',sans-serif] text-[#222]">
      <TitleBar />
      <MenuBar />
      <Ribbon />
      <FormulaBar />
      <Sheet />
      <SheetTabs />
      <StatusBar />
      <Arrows />
      <Watermark />
    </div>
  );
}
